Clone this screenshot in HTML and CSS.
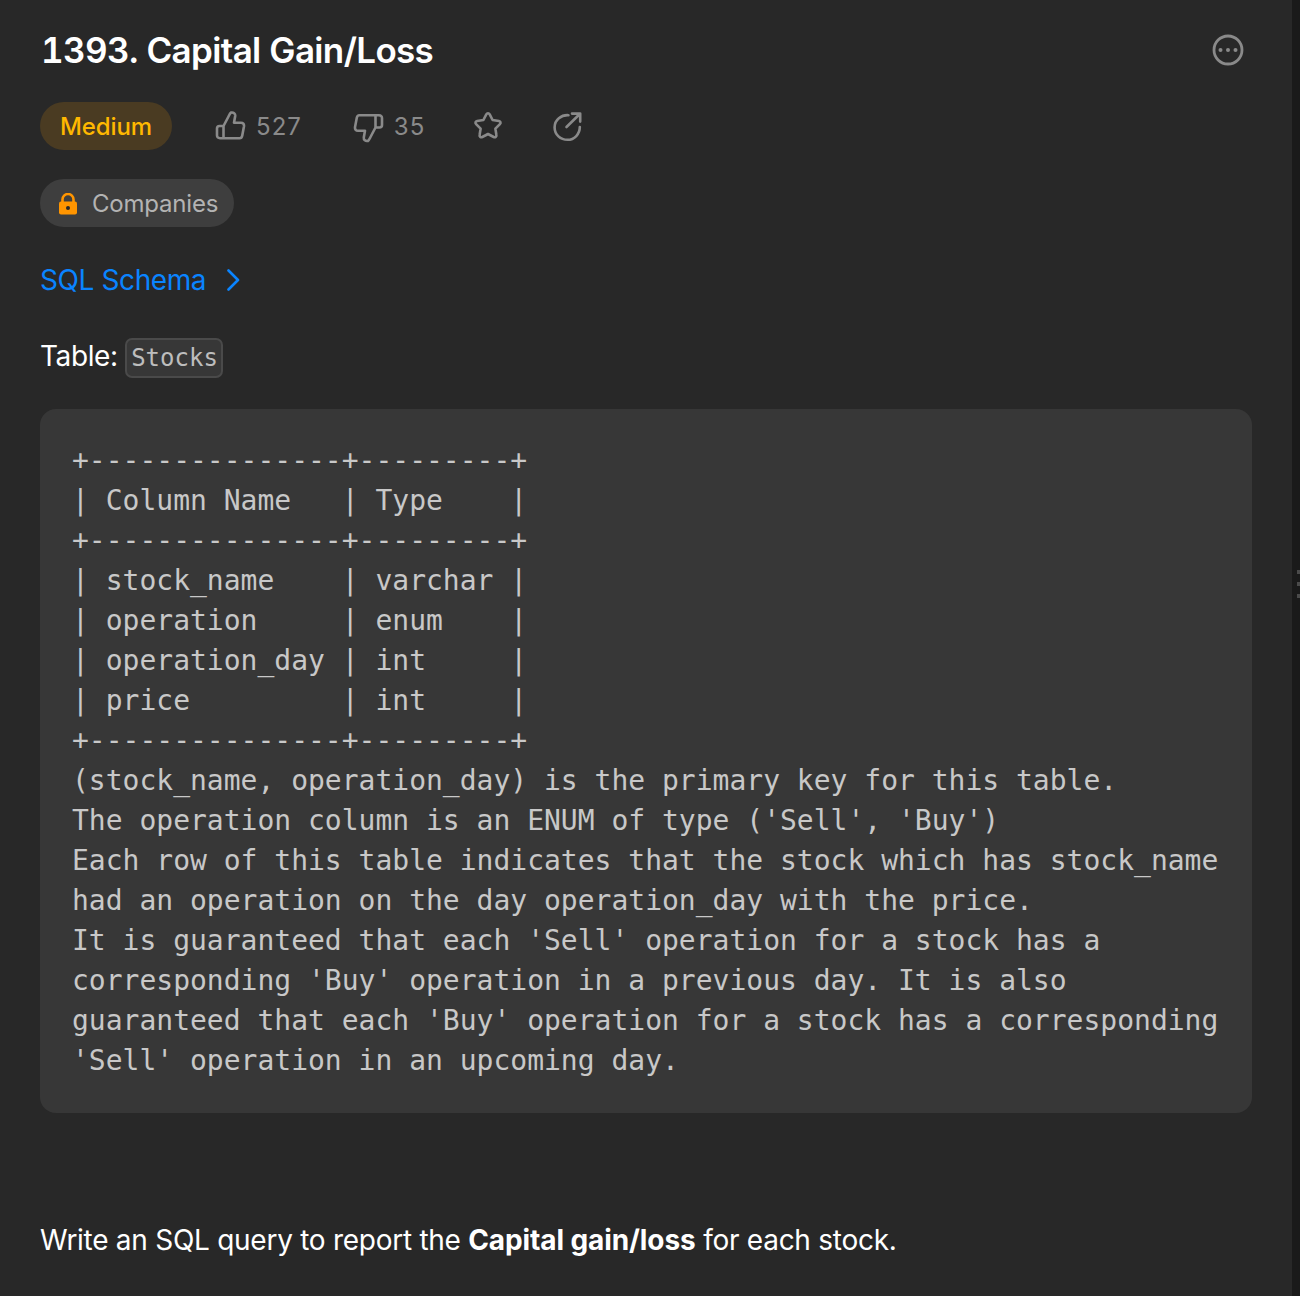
FILE: index.html
```html
<!DOCTYPE html>
<html>
<head>
    <title>1393. Capital Gain/Loss</title>
    <link rel="stylesheet" href="styles.css">
</head>
<body>
    <div class="page">
        <div class="description">
            <div class="title-row">
                <h1>1393. Capital Gain/Loss</h1>
                <svg class="more-icon" width="32" height="32" viewBox="0 0 32 32" fill="none">
                    <circle cx="16" cy="16" r="14" stroke="#8a8a8a" stroke-width="2.8"/>
                    <circle cx="8.5" cy="16" r="2" fill="#8a8a8a"/>
                    <circle cx="16" cy="16" r="2" fill="#8a8a8a"/>
                    <circle cx="23.5" cy="16" r="2" fill="#8a8a8a"/>
                </svg>
            </div>
            <div class="meta-row">
                <span class="difficulty">Medium</span>
                <span class="action action-like">
                    <svg width="32" height="32" viewBox="0 0 32 32" fill="none" stroke="#8a8a8a" stroke-width="2.6" stroke-linejoin="round" stroke-linecap="round">
                        <path d="M8.500 15l5-9.500c1-2 1.300-3 2.500-3.900 2.500-.6 4.500 1 4.200 3.400l-1.200 6.700h7c2 0 3.200 1.500 3 3.500l-1.800 9.500c-.3 1.500-1 2.500-2.500 2.500H5c-2 0-3-1-3-3V17.500c0-1.500 1-2.500 2.500-2.500h4v12"/>
                    </svg>
                    <span>527</span>
                </span>
                <span class="action action-dislike">
                    <svg width="32" height="32" viewBox="0 0 32 32" fill="none" stroke="#8a8a8a" stroke-width="2.6" stroke-linejoin="round" stroke-linecap="round">
                        <path transform="rotate(180 16 16) translate(0 .5)" d="M8.500 15l5-9.500c1-2 1.300-3 2.500-3.900 2.500-.6 4.500 1 4.200 3.400l-1.200 6.700h7c2 0 3.200 1.500 3 3.500l-1.800 9.500c-.3 1.500-1 2.500-2.500 2.500H5c-2 0-3-1-3-3V17.500c0-1.500 1-2.500 2.500-2.500h4v12"/>
                    </svg>
                    <span>35</span>
                </span>
                <svg class="icon-star" width="32" height="32" viewBox="0 0 32 32" fill="none" stroke="#8a8a8a" stroke-width="2.6" stroke-linejoin="round">
                    <path d="M14.300 4.300c.8-1.400 2.600-1.400 3.400 0l2.900 5.700 6.300 1c1.600.3 2.200 2 1 3.200l-4.500 4.500 1 6.300c.3 1.600-1.200 2.700-2.700 2l-5.700-3-5.700 3c-1.500.7-3-.4-2.700-2l1-6.300-4.500-4.500c-1.200-1.200-.6-2.900 1-3.200l6.300-1z"/>
                </svg>
                <svg class="icon-share" width="32" height="32" viewBox="0 0 32 32" fill="none" stroke="#8a8a8a" stroke-width="2.6" stroke-linecap="round" stroke-linejoin="round">
                    <path d="M16.500 5.200C9.300 4.700 2.600 9.800 2.600 17.300S8.500 29.800 15.500 29.800 27.800 24 27.800 17"/>
                    <path d="M14.500 17L27.800 4M20 3.600h8.200v8"/>
                </svg>
            </div>
            <div class="companies">
                <svg width="20" height="22" viewBox="0 0 20 22">
                    <path d="M4.500 9V6.500a5.500 5.500 0 0 1 11 0V9" fill="none" stroke="#ff9500" stroke-width="2.600"/>
                    <rect x="1" y="8.500" width="18" height="13" rx="2" fill="#ff9500"/>
                    <circle cx="10" cy="15" r="2" fill="#282828"/>
                </svg>
                <span>Companies</span>
            </div>
            <a class="schema-link" href="#">
                <span>SQL Schema</span>
                <svg width="14" height="22" viewBox="0 0 14 22" fill="none" stroke="#0a84ff" stroke-width="2.600" stroke-linecap="round" stroke-linejoin="round">
                    <path d="M2.500 1.500L12 11l-9.500 9.500"/>
                </svg>
            </a>
            <p class="table-line">Table: <code>Stocks</code></p>
            <pre class="schema">
+---------------+---------+
| Column Name   | Type    |
+---------------+---------+
| stock_name    | varchar |
| operation     | enum    |
| operation_day | int     |
| price         | int     |
+---------------+---------+
(stock_name, operation_day) is the primary key for this table.
The operation column is an ENUM of type ('Sell', 'Buy')
Each row of this table indicates that the stock which has stock_name
had an operation on the day operation_day with the price.
It is guaranteed that each 'Sell' operation for a stock has a
corresponding 'Buy' operation in a previous day. It is also
guaranteed that each 'Buy' operation for a stock has a corresponding
'Sell' operation in an upcoming day.
</pre>
            <p class="question">Write an SQL query to report the <strong>Capital gain/loss</strong> for each stock.</p>
        </div>
        <div class="gutter">
            <span></span>
            <span></span>
            <span></span>
        </div>
    </div>
</body>
</html>
```

FILE: styles.css
```css
* {
    margin: 0;
    padding: 0;
    box-sizing: border-box;
}

html, body {
    height: 100%;
    overflow: hidden;
}

body {
    background: #282828;
    color: #fff;
    font-family: Inter, 'Noto Sans', sans-serif;
}

.page {
    display: flex;
    height: 1296px;
}

.description {
    flex: 1;
    min-width: 0;
    padding: 28px 40px 0;
}

.title-row {
    display: flex;
    align-items: center;
    justify-content: space-between;
    height: 44px;
    padding: 0 8px 0 1px;
}

.title-row h1 {
    font-size: 35px;
    font-weight: 600;
    font-variant-numeric: tabular-nums;
    line-height: 46px;
    letter-spacing: -0.65px;
}

.meta-row {
    display: flex;
    align-items: center;
    height: 48px;
    margin-top: 30px;
}

.difficulty {
    display: flex;
    align-items: center;
    height: 48px;
    padding: 1px 20px 0;
    border-radius: 24px;
    background: #4a3b22;
    color: #ffb800;
    font-size: 24px;
    font-weight: 500;
    letter-spacing: -0.1px;
}

.action {
    display: flex;
    align-items: center;
    gap: 10px;
    padding-top: 1px;
    color: #8a8a8a;
    font-size: 24px;
    letter-spacing: 1px;
}

.action-like {
    margin-left: 43px;
    gap: 9px;
}

.action-dislike {
    margin-left: 50px;
}

.icon-star {
    margin-left: 47px;
}

.icon-share {
    margin-left: 48px;
}

.companies {
    display: inline-flex;
    align-items: center;
    gap: 14px;
    height: 48px;
    margin-top: 29px;
    padding: 1px 16px 0 18px;
    border-radius: 24px;
    background: #3e3e3e;
    color: #b3b3b3;
    font-size: 24px;
    letter-spacing: -0.2px;
}

.schema-link {
    display: flex;
    align-items: center;
    gap: 20px;
    margin-top: 29px;
    color: #0a84ff;
    font-size: 28px;
    letter-spacing: -0.4px;
    line-height: 48px;
    text-decoration: none;
}

.table-line {
    margin-top: 28px;
    font-size: 28px;
    letter-spacing: -0.4px;
    line-height: 48px;
}

.table-line code {
    display: inline-block;
    height: 40px;
    padding: 0 3.500px 0 4px;
    border: 2px solid #4a4a4a;
    border-radius: 7px;
    background: #373737;
    color: #bdbdbd;
    font-family: 'DejaVu Sans Mono', monospace;
    font-size: 24px;
    letter-spacing: 0;
    line-height: 36px;
    vertical-align: 0;
}

.schema {
    margin-top: 29px;
    padding: 32px;
    height: 704px;
    border-radius: 16px;
    background: #373737;
    color: #c8c8c8;
    font-family: 'DejaVu Sans Mono', monospace;
    font-size: 28px;
    line-height: 40px;
}

.question {
    margin-top: 103px;
    font-size: 28px;
    letter-spacing: -0.27px;
    line-height: 48px;
}

.question strong {
    font-weight: 700;
    letter-spacing: -0.1px;
}

.gutter {
    display: flex;
    flex-direction: column;
    align-items: flex-end;
    justify-content: center;
    gap: 8px;
    width: 8px;
    padding-bottom: 128px;
    background: #1a1a1a;
}

.gutter span {
    width: 3px;
    height: 4px;
    background: #4a4a4a;
}
```
